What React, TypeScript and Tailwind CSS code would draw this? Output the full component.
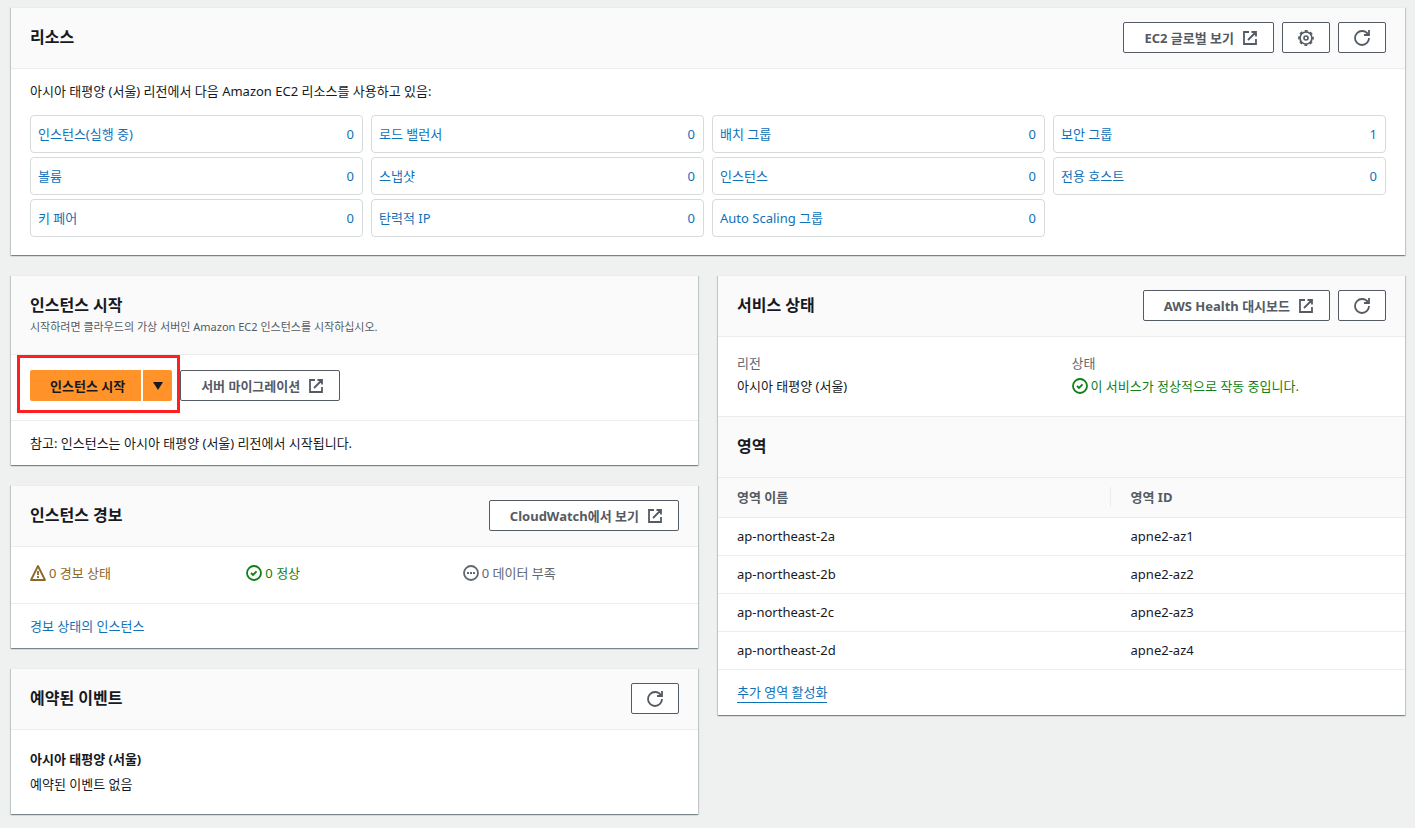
import type { ReactNode } from 'react'

const resources = [
    { label: '인스턴스(실행 중)', count: 0 },
    { label: '로드 밸런서', count: 0 },
    { label: '배치 그룹', count: 0 },
    { label: '보안 그룹', count: 1 },
    { label: '볼륨', count: 0 },
    { label: '스냅샷', count: 0 },
    { label: '인스턴스', count: 0 },
    { label: '전용 호스트', count: 0 },
    { label: '키 페어', count: 0 },
    { label: '탄력적 IP', count: 0 },
    { label: 'Auto Scaling 그룹', count: 0 },
]

const zones = [
    { name: 'ap-northeast-2a', id: 'apne2-az1' },
    { name: 'ap-northeast-2b', id: 'apne2-az2' },
    { name: 'ap-northeast-2c', id: 'apne2-az3' },
    { name: 'ap-northeast-2d', id: 'apne2-az4' },
]

function Icon({ children }: { children: ReactNode }) {
    return (
        <svg className="w-4 h-4 shrink-0" viewBox="0 0 16 16" fill="none" stroke="currentColor" strokeWidth={1.8} aria-hidden="true">
            {children}
        </svg>
    )
}

function ExternalIcon() {
    return (
        <Icon>
            <path d="M9.5 2H14v4.5M6 10l8-8M14 9.048V14H2V2h5" />
        </Icon>
    )
}

function RefreshIcon() {
    return (
        <Icon>
            <path d="M10 5h5V0" />
            <path d="M15 8a6.957 6.957 0 0 1-7 7 6.957 6.957 0 0 1-7-7 6.957 6.957 0 0 1 7-7 6.87 6.87 0 0 1 6.3 4" />
        </Icon>
    )
}

function GearIcon() {
    return (
        <Icon>
            <circle cx="8" cy="8" r="6" strokeWidth={1.7} />
            {/* teeth */}
            <circle cx="8" cy="8" r="7.1" strokeWidth={1.6} strokeDasharray="3.1 2.476" strokeDashoffset="1.55" />
            <circle cx="8" cy="8" r="2" strokeWidth={1.6} />
        </Icon>
    )
}

function CheckIcon() {
    return (
        <Icon>
            <circle cx="8" cy="8" r="7" />
            <path d="m5 8 2 2 3.521-3.521" />
        </Icon>
    )
}

function WarningIcon() {
    return (
        <Icon>
            <path strokeLinejoin="round" d="m8 1 7 14H1L8 1z" />
            <path d="M8 6v4M8 11v2" />
        </Icon>
    )
}

function PendingIcon() {
    return (
        <Icon>
            <circle cx="8" cy="8" r="7" />
            <path d="M4 8h2M7 8h2M10 8h2" />
        </Icon>
    )
}

function Card({ children }: { children: ReactNode }) {
    return (
        <section className="bg-white border-t border-[#eaeded] shadow-[0_1px_1px_0_rgba(0,28,36,0.3),1px_1px_1px_0_rgba(0,28,36,0.15),-1px_1px_1px_0_rgba(0,28,36,0.15)]">
            {children}
        </section>
    )
}

function CardHeader({ title, description, children }: { title: string; description?: string; children?: ReactNode }) {
    return (
        <div className="flex items-start justify-between bg-[#fafafa] border-b border-[#eaeded] px-[19px] pt-[14px] pb-[15px]">
            <div>
                <h2 className="text-base leading-[31px] font-bold">{title}</h2>
                {description && <p className="text-[11px] leading-3 pb-[6px] text-[#545b64]">{description}</p>}
            </div>
            <div className="flex gap-2">{children}</div>
        </div>
    )
}

function LinkButton({ children }: { children: ReactNode }) {
    return (
        <a href="#" className="flex items-center gap-2 h-[31px] pl-5 pr-[15px] bg-white border border-[#545b64] rounded-xs font-bold text-[#545b64]">
            {children}
            <ExternalIcon />
        </a>
    )
}

function IconButton({ label, children }: { label: string; children: ReactNode }) {
    return (
        <button type="button" aria-label={label} className="flex items-center justify-center w-12 h-[31px] bg-white border border-[#545b64] rounded-xs text-[#545b64]">
            {children}
        </button>
    )
}

export default function App() {
    return (
        <div className="min-h-screen bg-[#eff1f1] pt-[7px] pb-3 pl-[11px] pr-[10px] text-[13px] leading-5 text-[#16191f] font-['Noto_Sans','Noto_Sans_CJK_KR',sans-serif]">
            <Card>
                <CardHeader title="리소스">
                    <LinkButton>EC2 글로벌 보기</LinkButton>
                    <IconButton label="설정"><GearIcon /></IconButton>
                    <IconButton label="새로 고침"><RefreshIcon /></IconButton>
                </CardHeader>
                <div className="px-[19px] pt-3 pb-[18px]">
                    <p>아시아 태평양 (서울) 리전에서 다음 Amazon EC2 리소스를 사용하고 있음:</p>
                    <div className="grid grid-cols-4 gap-x-2 gap-y-1 mt-[14px]">
                        {resources.map((item) => (
                            <a key={item.label} href="#" className="flex items-center justify-between h-[38px] pl-[7px] pr-2 border border-[#d5dbdb] rounded text-[#0f72b9]">
                                <span>{item.label}</span>
                                <span>{item.count}</span>
                            </a>
                        ))}
                    </div>
                </div>
            </Card>

            <div className="grid grid-cols-2 items-start gap-x-5 mt-5">
                <div className="flex flex-col gap-5">
                    {/* Launch instance */}
                    <Card>
                        <CardHeader title="인스턴스 시작" description="시작하려면 클라우드의 가상 서버인 Amazon EC2 인스턴스를 시작하십시오." />
                        <div className="flex gap-2 px-[19px] pt-[15px] pb-[19px] border-b border-[#eaeded]">
                            <div className="relative flex gap-[2px]">
                                <button type="button" className="h-[31px] pl-5 pr-4 bg-[#ff9228] rounded-l-xs font-bold">인스턴스 시작</button>
                                <button type="button" aria-label="시작 옵션" className="flex items-center justify-center w-[29px] h-[31px] bg-[#ff9228] rounded-r-xs">
                                    <svg className="w-[10px] h-2" viewBox="0 0 10 8" fill="currentColor" aria-hidden="true">
                                        <path d="M0 0h10L5 8z" />
                                    </svg>
                                </button>
                                <div className="absolute -top-[15px] -bottom-3 -left-[13px] -right-2 border-3 border-[#ff1f1f] pointer-events-none"></div>
                            </div>
                            <LinkButton>서버 마이그레이션</LinkButton>
                        </div>
                        <p className="px-[19px] py-3">참고: 인스턴스는 아시아 태평양 (서울) 리전에서 시작됩니다.</p>
                    </Card>

                    {/* Alarms */}
                    <Card>
                        <CardHeader title="인스턴스 경보">
                            <LinkButton>CloudWatch에서 보기</LinkButton>
                        </CardHeader>
                        <div className="grid grid-cols-3 px-[19px] pt-4 pb-5 border-b border-[#eaeded]">
                            <div className="flex items-center gap-[3px] text-[#8d6724]"><WarningIcon />0 경보 상태</div>
                            <div className="flex items-center gap-[3px] text-[#107f17]"><CheckIcon />0 정상</div>
                            <div className="flex items-center gap-[3px] text-[#606871]"><PendingIcon />0 데이터 부족</div>
                        </div>
                        <div className="px-[19px] py-3">
                            <a href="#" className="text-[#0f72b9]">경보 상태의 인스턴스</a>
                        </div>
                    </Card>

                    {/* Scheduled events */}
                    <Card>
                        <CardHeader title="예약된 이벤트">
                            <IconButton label="새로 고침"><RefreshIcon /></IconButton>
                        </CardHeader>
                        <div className="px-[19px] pt-[19px] pb-5">
                            <h3 className="font-bold">아시아 태평양 (서울)</h3>
                            <p className="mt-[5px]">예약된 이벤트 없음</p>
                        </div>
                    </Card>
                </div>

                {/* Service health and zones */}
                <Card>
                    <CardHeader title="서비스 상태">
                        <LinkButton>AWS Health 대시보드</LinkButton>
                        <IconButton label="새로 고침"><RefreshIcon /></IconButton>
                    </CardHeader>
                    <dl className="grid grid-cols-2 gap-x-5 px-[19px] pt-4 pb-5 border-b border-[#eaeded]">
                        <div>
                            <dt className="text-[#606871]">리전</dt>
                            <dd className="mt-[3px]">아시아 태평양 (서울)</dd>
                        </div>
                        <div>
                            <dt className="text-[#606871]">상태</dt>
                            <dd className="flex items-center gap-[3px] mt-[3px] text-[#107f17]"><CheckIcon />이 서비스가 정상적으로 작동 중입니다.</dd>
                        </div>
                    </dl>
                    <CardHeader title="영역" />
                    <table className="w-full text-left">
                        <thead>
                            <tr className="h-[39px] bg-[#fafafa] border-b border-[#eaeded] text-[#545b64]">
                                <th className="w-4/7 pl-[19px]">
                                    <div className="border-r border-[#eaeded]">영역 이름</div>
                                </th>
                                <th className="pl-5">영역 ID</th>
                            </tr>
                        </thead>
                        <tbody>
                            {zones.map((zone) => (
                                <tr key={zone.id} className="h-[38px] border-b border-[#eaeded]">
                                    <td className="pl-[19px]">{zone.name}</td>
                                    <td className="pl-5">{zone.id}</td>
                                </tr>
                            ))}
                        </tbody>
                    </table>
                    <div className="px-[19px] py-3">
                        <a href="#" className="inline-block border-b border-[#0f72b9] leading-[19px] text-[#0f72b9]">추가 영역 활성화</a>
                    </div>
                </Card>
            </div>
        </div>
    )
}
